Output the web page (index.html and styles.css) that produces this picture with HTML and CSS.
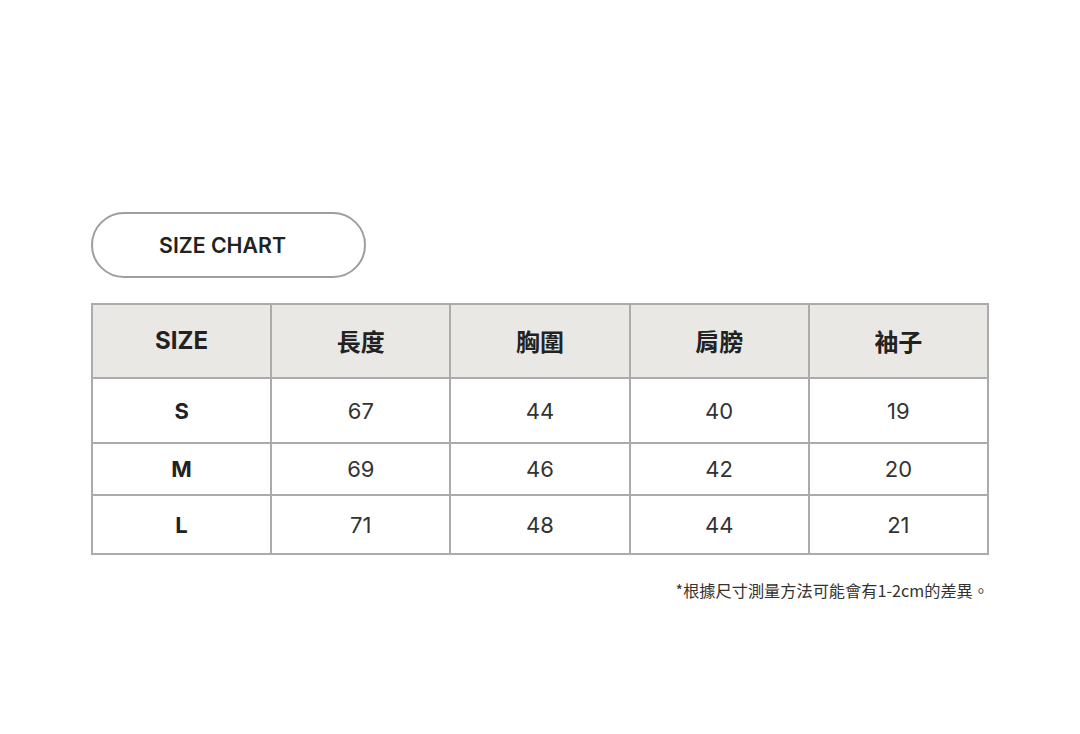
FILE: index.html
```html
<!DOCTYPE html>
<html lang="zh-Hant">
<head>
<meta charset="utf-8">
<link rel="stylesheet" href="styles.css">
</head>
<body>
<main class="page">
  <div class="pill">SIZE CHART</div>
  <table class="chart">
    <thead>
      <tr><th>SIZE</th><th>長度</th><th>胸圍</th><th>肩膀</th><th>袖子</th></tr>
    </thead>
    <tbody>
      <tr class="r1"><th>S</th><td>67</td><td>44</td><td>40</td><td>19</td></tr>
      <tr class="r2"><th>M</th><td>69</td><td>46</td><td>42</td><td>20</td></tr>
      <tr class="r3"><th>L</th><td>71</td><td>48</td><td>44</td><td>21</td></tr>
    </tbody>
  </table>
  <p class="note">*根據尺寸測量方法可能會有1-2cm的差異。</p>
</main>
</body>
</html>
```
FILE: styles.css
```css
html, body {
  margin: 0;
  padding: 0;
  background: #ffffff;
}
body {
  font-family: "Inter", "Noto Sans CJK TC", sans-serif;
  color: #222;
}
.page {
  width: 898px;
  margin-left: 91px;
  padding-top: 212px;
}
.pill {
  box-sizing: border-box;
  width: 275px;
  height: 66px;
  border: 2px solid #9e9e9e;
  border-radius: 33px;
  display: flex;
  align-items: center;
  justify-content: center;
  padding-right: 12px;
  font-size: 21.3px;
  font-weight: 600;
  color: #222;
}
.chart {
  margin-top: 25px;
  width: 898px;
  border-collapse: collapse;
  table-layout: fixed;
}
.chart th, .chart td {
  border: 2px solid #ababab;
  text-align: center;
  padding: 0;
  font-size: 22px;
}
.chart thead th {
  background: #e9e8e5;
  height: 70px;
  font-size: 24px;
  font-weight: 700;
  color: #222;
  padding-bottom: 2px;
}
.chart tbody th {
  font-weight: 700;
  color: #222;
}
.chart tbody td {
  font-weight: 400;
  color: #333;
}
.chart .r1 th, .chart .r1 td { height: 63px; }
.chart .r2 th, .chart .r2 td { height: 50px; }
.chart .r3 th, .chart .r3 td { height: 57px; }
.note {
  margin: 23px 0 0;
  text-align: right;
  font-family: "Noto Sans CJK TC", sans-serif;
  font-size: 16.2px;
  color: #333;
}
```
